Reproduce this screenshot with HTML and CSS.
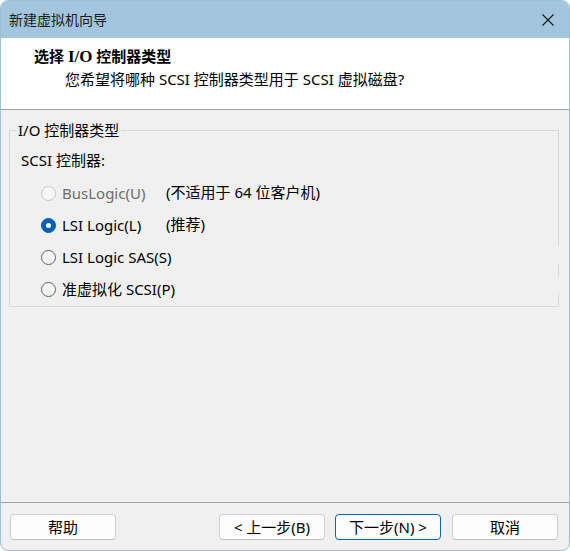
FILE: index.html
```html
<!DOCTYPE html>
<html lang="zh-CN">
<head>
<meta charset="utf-8">
<title>新建虚拟机向导</title>
<link rel="stylesheet" href="styles.css">
</head>
<body>
<div class="window">
  <div class="titlebar">
    <span class="title">新建虚拟机向导</span>
    <svg class="close" width="12" height="12" viewBox="0 0 12 12"><path d="M0.5 0.5 L11.5 11.5 M11.5 0.5 L0.5 11.5" stroke="#1a1a1a" stroke-width="1.1" fill="none"/></svg>
  </div>
  <div class="header">
    <div class="h-title">选择 <span class="serif">I/O</span> 控制器类型</div>
    <div class="h-sub">您希望将哪种 SCSI 控制器类型用于 SCSI 虚拟磁盘?</div>
  </div>
  <div class="content">
    <fieldset class="group">
      <legend class="legend">I/O 控制器类型</legend>
      <div class="label">SCSI 控制器:</div>
      <div class="options">
        <div class="opt disabled"><span class="radio"></span><span>BusLogic(U)</span></div>
        <div class="note">(不适用于 64 位客户机)</div>
        <div class="opt"><span class="radio checked"></span><span>LSI Logic(L)</span></div>
        <div class="note">(推荐)</div>
        <div class="opt"><span class="radio"></span><span>LSI Logic SAS(S)</span></div>
        <div class="note"></div>
        <div class="opt"><span class="radio"></span><span>准虚拟化 SCSI(P)</span></div>
        <div class="note"></div>
      </div>
    </fieldset>
  </div>
  <div class="footer">
    <button class="btn">帮助</button>
    <div class="spacer"></div>
    <button class="btn">&lt; 上一步(B)</button>
    <button class="btn primary">下一步(N) &gt;</button>
    <button class="btn cancel">取消</button>
  </div>
</div>
</body>
</html>
```

FILE: styles.css
```css
* { box-sizing: border-box; }
html, body { margin: 0; padding: 0; background: #ffffff; }
body {
  font-family: "Noto Sans", "Noto Sans CJK SC", sans-serif;
  font-size: 15px;
  color: #000;
}
.window {
  width: 570px;
  height: 551px;
  border: 1px solid #9cc0da;
  border-radius: 8px;
  overflow: hidden;
  display: flex;
  flex-direction: column;
  background: #f0f0f0;
}
.titlebar {
  height: 37px;
  flex: none;
  background: #a3c5dd;
  display: flex;
  align-items: center;
  justify-content: space-between;
  padding: 0 15px 0 8px;
}
.title { font-size: 14px; line-height: 18px; color: #1a1a1a; }
.close { display: block; }
.header {
  height: 72px;
  flex: none;
  background: #fff;
  border-bottom: 1px solid #a0a0a0;
  padding-top: 9px;
}
.h-title {
  font-weight: bold;
  font-size: 15px;
  line-height: 19px;
  padding-left: 33px;
  white-space: nowrap;
}
.serif { font-family: "Liberation Serif", serif; font-size: 17px; }
.h-sub {
  margin-top: 4px;
  line-height: 19px;
  padding-left: 64px;
  white-space: nowrap;
}
.content {
  flex: 1;
  padding: 11px 10px 0 8px;
}
.group {
  margin: 0;
  padding: 0;
  border: 1px solid #dadada;
  border-right: none;
  background-image:
    linear-gradient(#dadada, #dadada),
    linear-gradient(#dadada, #dadada),
    linear-gradient(#dadada, #dadada);
  background-repeat: no-repeat;
  background-size: 1px 115px, 1px 13px, 1px 13px;
  background-position: right 0 top 0, right 0 top 133px, right 0 bottom 0;
  height: 186px;
}
.legend {
  margin-left: 6px;
  padding: 0 2px;
  line-height: 18px;
}
.label {
  margin-top: 12px;
  padding-left: 11px;
  line-height: 18px;
}
.options {
  margin-top: 8px;
  padding-left: 31px;
  display: grid;
  grid-template-columns: 125px 1fr;
  grid-auto-rows: 32px;
  align-items: center;
}
.opt {
  display: flex;
  align-items: center;
  gap: 6px;
  line-height: 18px;
  white-space: nowrap;
}
.note { line-height: 18px; margin-top: -3px; white-space: nowrap; }
.opt.disabled { color: #6d6d6d; }
.radio {
  width: 15px;
  height: 15px;
  border-radius: 50%;
  border: 1px solid #616161;
  background: #f7f7f7;
  flex: none;
  position: relative;
}
.opt.disabled .radio { border-color: #c5c5c5; background: #f7f7f7; }
.radio.checked {
  border-color: #005fb8;
  background: #005fb8;
}
.radio.checked::after {
  content: "";
  position: absolute;
  left: 4px;
  top: 4px;
  width: 5px;
  height: 5px;
  border-radius: 50%;
  background: #fff;
}
.footer {
  flex: none;
  height: 48px;
  border-top: 1px solid #a0a0a0;
  padding: 11px 11px 0 9px;
  display: flex;
  align-items: flex-start;
  gap: 10px;
}
.spacer { flex: 1; }
.btn {
  width: 106px;
  height: 26px;
  font-family: "Noto Sans", "Noto Sans CJK SC", sans-serif;
  font-size: 15px;
  line-height: 18px;
  color: #000;
  background: #fdfdfd;
  border: 1px solid #d0d0d0;
  border-bottom-color: #c0c0c0;
  border-radius: 4px;
  padding: 0;
}
.btn.primary { border: 1px solid #0067c0; }
.btn.cancel { margin-left: 1px; }
```
